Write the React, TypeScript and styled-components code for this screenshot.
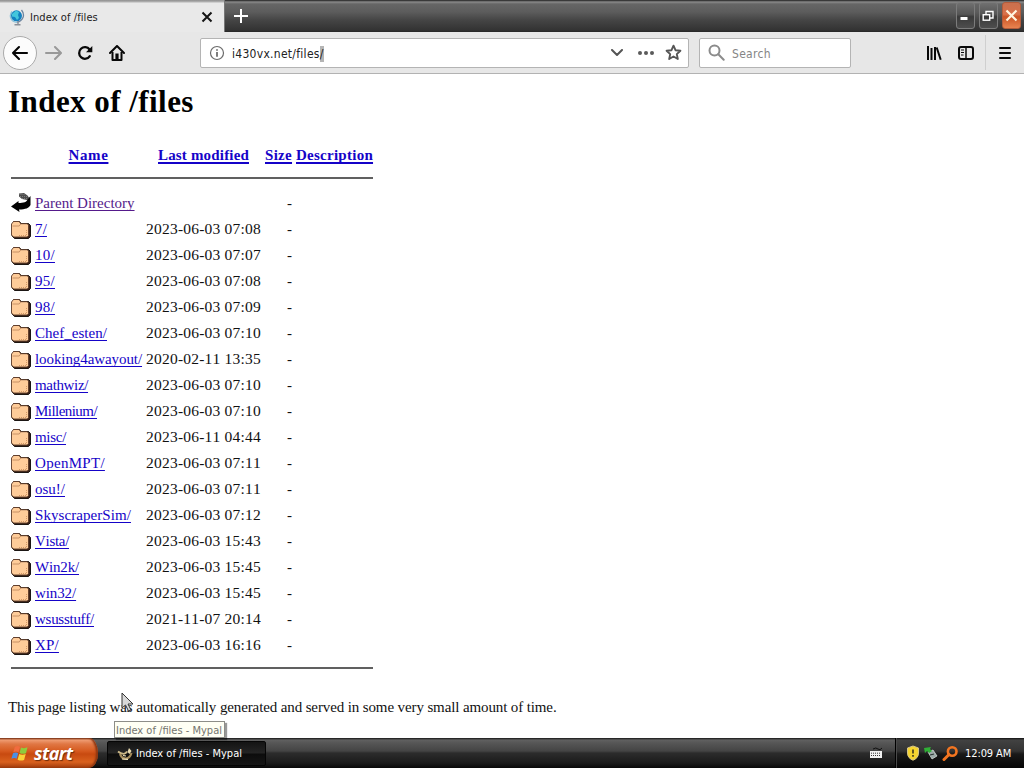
import React from "react";
import styled, { createGlobalStyle } from "styled-components";

const uiFont = `"DejaVu Sans Condensed", "DejaVu Sans", sans-serif`;
const pageFont = `"Liberation Serif", serif`;

const GlobalStyle = createGlobalStyle`
  *, *::before, *::after { box-sizing: border-box; }
  html, body { margin: 0; padding: 0; overflow: hidden; }
  svg { display: block; flex: none; }
`;

const Screen = styled.div`
  position: relative;
  display: flex;
  flex-direction: column;
  width: 1024px;
  height: 768px;
  background: #fff;
  overflow: hidden;
`;

/* ---------- Browser chrome ---------- */

const TitleBar = styled.header`
  display: flex;
  height: 32px;
  background: linear-gradient(#1e1e1e 0, #8a8a8a 2px, #666 4px, #5c5c5c 12px, #454545 20px, #333 30px, #262626 32px);
`;

const Tab = styled.div`
  display: flex;
  align-items: center;
  width: 225px;
  height: 32px;
  padding: 2px 10px 0 9px;
  background: linear-gradient(#8e8e8e 0, #b5b5b5 2px, #e9e9e9 3px);
  border-right: 1px solid #777;
`;

const UiText = styled.span<{ $size?: number; $track?: number; $color?: string }>`
  font: ${(p) => p.$size ?? 11}px/16px ${uiFont};
  letter-spacing: ${(p) => p.$track ?? 0}px;
  color: ${(p) => p.$color ?? "#222"};
  white-space: nowrap;
`;

const TabTitle = styled(UiText)`
  flex: 1;
  margin: 1px 0 0 5px;
`;

const NewTab = styled.div`
  display: flex;
  align-items: center;
  justify-content: center;
  width: 32px;
`;

const WindowButtons = styled.div`
  display: flex;
  gap: 4px;
  margin-left: auto;
  padding: 2px 3px 3px 0;
`;

const WindowButton = styled.div<{ $close?: boolean }>`
  display: flex;
  align-items: center;
  justify-content: center;
  width: 19px;
  height: 27px;
  border: 1px solid ${(p) => (p.$close ? "#b35c3b" : "#7c7c7c")};
  border-radius: 3px;
  background: ${(p) =>
    p.$close
      ? "linear-gradient(#c9704e, #d9714a 45%, #ca5424 55%, #e88350)"
      : "linear-gradient(#707070, #555 45%, #3a3a3a 55%, #4e4e4e)"};
`;

const Toolbar = styled.nav`
  display: flex;
  align-items: center;
  height: 42px;
  padding: 0 6px 0 3px;
  background: #e7e7e7;
  border-bottom: 1px solid #b2b2b2;
`;

const BackButton = styled.div`
  display: flex;
  align-items: center;
  justify-content: center;
  width: 34px;
  height: 34px;
  border: 1px solid #aaa;
  border-radius: 50%;
  background: #fcfcfc;
`;

const ToolIcon = styled.div<{ $width?: number }>`
  display: flex;
  align-items: center;
  justify-content: center;
  width: ${(p) => p.$width ?? 32}px;
  height: 32px;
`;

const Field = styled.div<{ $width: number; $left: number }>`
  display: flex;
  align-items: center;
  width: ${(p) => p.$width}px;
  height: 30px;
  margin-left: ${(p) => p.$left}px;
  padding: 0 6px 0 8px;
  background: #fff;
  border: 1px solid #b4b4b4;
  border-radius: 2px;
`;

const Address = styled(UiText)`
  flex: 1;
  margin: 2px 0 0 7px;
`;

const Selected = styled.span`
  padding: 1px 0;
  background: #b5b5b5;
`;

const FieldActions = styled.div`
  display: grid;
  grid-template-columns: 27px 28px 17px;
  align-items: center;
`;

const RightTools = styled.div`
  display: flex;
  align-items: center;
  margin-left: auto;
`;

const Divider = styled.div`
  width: 1px;
  height: 35px;
  margin: 0 6px 0 3px;
  background: #cfcfcf;
`;

/* ---------- Directory listing ---------- */

const Page = styled.main`
  flex: 1;
  padding: 0 8px;
  font: 15px/26px ${pageFont};
  font-kerning: none;
  font-variant-ligatures: none;
  color: #111;
`;

const Heading = styled.h1`
  margin: 9px 0 22px;
  font-size: 31px;
  line-height: 37px;
  letter-spacing: 0.45px;
  color: #000;
`;

const Listing = styled.div`
  width: 365px;
  padding-left: 3px;
`;

const Row = styled.div`
  display: grid;
  grid-template-columns: 24px 107px 4px 115px 4px 27px 4px 77px;
  align-items: center;
  height: 26px;
  white-space: nowrap;
`;

const Cell = styled.span<{ $col: number; $align?: string; $track?: number }>`
  grid-column: ${(p) => p.$col};
  grid-row: 1;
  text-align: ${(p) => p.$align ?? "left"};
  letter-spacing: ${(p) => p.$track ?? 0}px;
`;

const DateCell = styled(Cell)`
  font-size: 15.5px;
  line-height: 26px;
`;

const Link = styled.a<{ $visited?: boolean }>`
  color: ${(p) => (p.$visited ? "#551a8b" : "#1503c8")};
  text-decoration: underline;
  text-decoration-thickness: 1px;
  text-underline-offset: 2px;
  text-decoration-skip-ink: none;
`;

const HeadLink = styled(Link)`
  font-weight: bold;
  text-decoration-thickness: 2px;
`;

const Rule = styled.hr<{ $top: number; $bottom: number }>`
  height: 2px;
  margin: ${(p) => p.$top}px 0 ${(p) => p.$bottom}px;
  border: 0;
  background: #606060;
`;

const Footer = styled.p`
  margin: 25px 0 0;
  letter-spacing: -0.12px;
`;

/* ---------- Taskbar ---------- */

const Taskbar = styled.footer`
  display: flex;
  height: 30px;
  background: linear-gradient(#151515 0, #606060 2px, #565656 5px, #444 13px, #2c2c2c 15px, #1b1b1b 25px, #080808 30px);
`;

const StartButton = styled.div`
  display: flex;
  align-items: center;
  gap: 5px;
  width: 98px;
  padding-left: 11px;
  border-radius: 0 9px 9px 0 / 0 15px 15px 0;
  background: linear-gradient(#6d2b12 0, #ef9c72 2px, #e07744 6px, #d65a1f 13px, #c84a10 16px, #d9611e 24px, #9e3a0c 30px);
  box-shadow: inset -2px 0 2px #8b3510;
`;

const StartLabel = styled.span`
  font: italic bold 18px/26px "Open Sans", sans-serif;
  letter-spacing: -0.6px;
  color: #fff;
  text-shadow: 1px 1px 1px #6d2c0c;
`;

const TaskButton = styled.div`
  display: flex;
  align-items: center;
  gap: 3px;
  width: 159px;
  height: 25px;
  margin: 3px 0 0 9px;
  padding: 1px 0 0 9px;
  border: 1px solid #050505;
  border-radius: 2px;
  background: linear-gradient(#141414, #242424 48%, #0c0c0c 52%, #161616);
`;

const Keyboard = styled.div`
  display: flex;
  align-items: center;
  margin: 0 12px 0 auto;
`;

const Tray = styled.div`
  display: flex;
  align-items: center;
  gap: 3px;
  width: 129px;
  padding-left: 10px;
  border-left: 1px solid #000;
  box-shadow: inset 1px 0 #4a4a4a;
  background: linear-gradient(#111 0, #424242 2px, #333 13px, #191919 16px, #050505 30px);
`;

const Clock = styled(UiText)`
  margin: 1px 0 0 3px;
`;

/* ---------- Overlays ---------- */

const Tooltip = styled.div`
  position: absolute;
  left: 114px;
  top: 721px;
  display: flex;
  align-items: center;
  width: 111px;
  height: 17px;
  padding: 2px 0 0 1px;
  background: #fffff4;
  border: 1px solid #8d8d88;
  box-shadow: 2px 2px 1px rgba(0, 0, 0, 0.4);
`;

const Pointer = styled.div`
  position: absolute;
  left: 121px;
  top: 692px;
`;

const GlobeIcon = () => (
  <svg width="16" height="17" viewBox="0 0 16 17">
    <path d="M3 2.5C-.5 7 2 13 8 13.3" fill="none" stroke="#8cc2d8" strokeWidth="1.3" />
    <circle cx="7.5" cy="6.8" r="5.5" fill="#1380c0" />
    <path d="M3 5l4-3.4 3 1.4-1 3 1 3-2 2-2-3-3-.5z" fill="#43c6dc" />
    <path d="M12.5 1c4 5 1.5 11-4.5 12.2" fill="none" stroke="#6b84a0" strokeWidth="1.3" />
    <path d="M9 12.5v3M5.5 15.7h6" stroke="#8a8f98" strokeWidth="1.4" />
  </svg>
);

const BackIcon = () => (
  <svg width="18" height="16" viewBox="0 0 18 16" fill="none" stroke="#050505" strokeWidth="2.1" strokeLinecap="round" strokeLinejoin="round">
    <path d="M16 8H2M8 2L2 8l6 6" />
  </svg>
);

const ForwardIcon = () => (
  <svg width="17" height="14" viewBox="0 0 17 14" fill="none" stroke="#999" strokeWidth="2" strokeLinecap="round" strokeLinejoin="round">
    <path d="M1 7h14M10 1l6 6-6 6" />
  </svg>
);

const ReloadIcon = () => (
  <svg width="16" height="16" viewBox="0 0 16 16">
    <path d="M12.8 11.2A5.8 5.8 0 1 1 12.6 4.5" fill="none" stroke="#080808" strokeWidth="2.3" strokeLinecap="round" />
    <path d="M15.3 1v6.2H9z" fill="#080808" />
  </svg>
);

const HomeIcon = () => (
  <svg width="16" height="16" viewBox="0 0 16 16">
    <path d="M1 8l7-7 7 7" fill="none" stroke="#080808" strokeWidth="2" strokeLinecap="round" strokeLinejoin="round" />
    <path d="M3.5 7v8h9V7" fill="none" stroke="#080808" strokeWidth="2" strokeLinejoin="round" />
    <path d="M6.4 8.5h3.2v6H6.4z" fill="#080808" />
  </svg>
);

const InfoIcon = () => (
  <svg width="16" height="16" viewBox="0 0 16 16">
    <circle cx="8" cy="8" r="6.5" fill="none" stroke="#6b6b6b" strokeWidth="1.2" />
    <path d="M8 4.2v1.6M8 7v4.8" stroke="#666" strokeWidth="1.7" />
  </svg>
);

const ChevronIcon = () => (
  <svg width="14" height="8" viewBox="0 0 14 8">
    <path d="M2 1l5 5 5-5" fill="none" stroke="#555" strokeWidth="2" strokeLinecap="round" strokeLinejoin="round" />
  </svg>
);

const DotsIcon = () => (
  <svg width="18" height="6" viewBox="0 0 18 6" fill="#5a5a5a">
    <circle cx="3" cy="3" r="2" />
    <circle cx="9" cy="3" r="2" />
    <circle cx="15" cy="3" r="2" />
  </svg>
);

const StarIcon = () => (
  <svg width="17" height="17" viewBox="0 0 17 17">
    <path d="M8.5 1.7l2 4.5 4.9.5-3.6 3.4 1 4.9-4.3-2.5L4.2 15l1-4.9-3.6-3.4 4.9-.5z" fill="#fff" stroke="#555" strokeWidth="1.9" strokeLinejoin="round" />
  </svg>
);

const SearchIcon = () => (
  <svg width="17" height="17" viewBox="0 0 17 17" fill="none" stroke="#8b8b8b" strokeWidth="2">
    <circle cx="6.5" cy="6.5" r="5" />
    <path d="M10.3 10.3l5.4 5.4" strokeLinecap="round" />
  </svg>
);

const LibraryIcon = () => (
  <svg width="16" height="16" viewBox="0 0 16 16" fill="none" stroke="#080808" strokeWidth="2">
    <path d="M2 1v14M5.5 3v12M9 2v13M10.7 2.5l4 12.2" />
  </svg>
);

const SidebarIcon = () => (
  <svg width="16" height="16" viewBox="0 0 16 16" fill="none" stroke="#080808">
    <rect x="1" y="2" width="14" height="12" rx="2" strokeWidth="2" />
    <path d="M8 2v12" strokeWidth="1.5" />
    <path d="M3 5h3M3 7.5h3M3 10h2.5" strokeWidth="1" />
  </svg>
);

const MenuIcon = () => (
  <svg width="14" height="14" viewBox="0 0 14 14" stroke="#080808" strokeWidth="2" strokeLinecap="round">
    <path d="M2 2h10M2 7h10M2 12h10" />
  </svg>
);

const FolderIcon = () => (
  <svg width="20" height="22" viewBox="0 0 20 22">
    <path d="M2.5 3.5h6l1.5 2h7.5l2 2v11l-2 2H3.5L1 18z" fill="#3a2117" stroke="#0c0806" strokeWidth=".9" />
    <path d="M.5 6L2.5 3.5h5.7L9.700 5.700h6.600l1.200 1.400v10.400L16.300 19H2.500L.5 17z" fill="#ffcc99" stroke="#5c3a28" strokeWidth=".9" />
    <path d="M1.500 8h6.700L9.700 6" fill="none" stroke="#c28a60" strokeWidth=".9" />
    <path d="M15.500 12v5.500H8" fill="none" stroke="#d39866" strokeWidth="1" strokeDasharray="1 1" />
  </svg>
);

const ParentIcon = () => (
  <svg width="20" height="22" viewBox="0 0 20 22">
    <path d="M8 1.500l5-.5 3.500 2.500L19 7l-3 1-5-1-3-2.500z" fill="#4c4c4c" />
    <path d="M8.500 2.500h5M9 4.500h7M11 6.500h7" stroke="#888" strokeWidth=".8" strokeDasharray="1 1" />
    <path d="M19.500 4v9c-1.500 3-5 4.500-11.500 4.500l.5 2.500L0 14.500 7.500 9v2c5 0 8.500-1 9-3.500z" fill="#020202" />
  </svg>
);

const WindowsLogo = () => (
  <svg width="18" height="17" viewBox="0 0 18 17">
    <path d="M3.800 2q3-2 5.200 0L7.500 7.300q-2.200-1.500-5.200 0z" fill="#f06b3e" />
    <path d="M10 2.400q3 1.500 6.500-.1L15 8.200q-3.400 1.300-6.500-.3z" fill="#8ecc3d" />
    <path d="M2 8.200q3-1.500 5.200 0l-1.600 5.600q-2.200-1.500-5.200 0z" fill="#4b90e4" />
    <path d="M8.200 8.900q3 1.500 6.500.2L13.100 15q-3.400 1.300-6.500-.3z" fill="#f9d238" />
  </svg>
);

const MypalIcon = () => (
  <svg width="16" height="16" viewBox="0 0 16 16">
    <path d="M1 5.500q3 2.500 6 2.300 2-.5 3-2.300" fill="none" stroke="#cbb888" strokeWidth="1.800" />
    <path d="M3 8q2 5 6 4.500T14.500 7" fill="none" stroke="#a58c5c" strokeWidth="2.200" />
    <path d="M12 2l2.500 3-2 3-2-2z" fill="#e8dab0" />
    <path d="M6 9.500l3 .5M5 13l6 .4" stroke="#f6eac2" strokeWidth="1.200" />
  </svg>
);

const KeyboardIcon = () => (
  <svg width="14" height="14" viewBox="0 0 14 14">
    <path d="M4 3q3-2 5 0t4-1" fill="none" stroke="#111" />
    <rect x="1" y="5" width="12" height="7" fill="#f1f1f1" />
    <path d="M2 7.200h10M2 9.500h10" stroke="#333" strokeDasharray="1 1" />
  </svg>
);

const ShieldIcon = () => (
  <svg width="14" height="16" viewBox="0 0 14 16">
    <path d="M1.500 3L7 1l5.500 2v5c0 4-2.500 6-5.500 7.200C4 14 1.500 12 1.500 8z" fill="#f6d42f" stroke="#d5c486" />
    <path d="M7 4.500v4M7 10v1.700" stroke="#302d1b" strokeWidth="1.500" />
  </svg>
);

const EjectIcon = () => (
  <svg width="16" height="16" viewBox="0 0 16 16">
    <path d="M5 7l5-2 4 6-5 3z" fill="#9ba9a6" stroke="#e0e5df" strokeWidth=".7" />
    <path d="M7 10l4-1" stroke="#26302f" />
    <path d="M1 3l7-1-1 2 2 2-3 2-2-2-2 2z" fill="#2faf36" />
  </svg>
);

const MagnifierIcon = () => (
  <svg width="17" height="17" viewBox="0 0 17 17" fill="none" stroke="#f27521">
    <circle cx="10.200" cy="6.500" r="4.300" strokeWidth="2.600" />
    <path d="M7 9.500l-5 5" strokeWidth="3" strokeLinecap="round" />
  </svg>
);

type Entry = { name: string; modified: string; track: number };

const entries: Entry[] = [
  { name: "7/", modified: "2023-06-03 07:08", track: 0.15 },
  { name: "10/", modified: "2023-06-03 07:07", track: 0.27 },
  { name: "95/", modified: "2023-06-03 07:08", track: 0.27 },
  { name: "98/", modified: "2023-06-03 07:09", track: 0.27 },
  { name: "Chef_esten/", modified: "2023-06-03 07:10", track: 0.03 },
  { name: "looking4awayout/", modified: "2020-02-11 13:35", track: -0.08 },
  { name: "mathwiz/", modified: "2023-06-03 07:10", track: -0.35 },
  { name: "Millenium/", modified: "2023-06-03 07:10", track: -0.55 },
  { name: "misc/", modified: "2023-06-11 04:44", track: -0.3 },
  { name: "OpenMPT/", modified: "2023-06-03 07:11", track: 0.3 },
  { name: "osu!/", modified: "2023-06-03 07:11", track: 0 },
  { name: "SkyscraperSim/", modified: "2023-06-03 07:12", track: 0.07 },
  { name: "Vista/", modified: "2023-06-03 15:43", track: -0.3 },
  { name: "Win2k/", modified: "2023-06-03 15:45", track: -0.17 },
  { name: "win32/", modified: "2023-06-03 15:45", track: -0.1 },
  { name: "wsusstuff/", modified: "2021-11-07 20:14", track: -0.27 },
  { name: "XP/", modified: "2023-06-03 16:16", track: 0.2 },
];

export default function App() {
  return (
    <Screen>
      <GlobalStyle />
      <TitleBar>
        <Tab>
          <GlobeIcon />
          <TabTitle $track={0.08}>Index of /files</TabTitle>
          <svg width="14" height="14" viewBox="0 0 14 14" stroke="#151515" strokeWidth="2">
            <path d="M2.5 2.5l9 9M11.5 2.5l-9 9" />
          </svg>
        </Tab>
        <NewTab>
          <svg width="14" height="14" viewBox="0 0 14 14" stroke="#fff" strokeWidth="2">
            <path d="M7 0v14M0 7h14" />
          </svg>
        </NewTab>
        <WindowButtons>
          <WindowButton>
            <svg width="13" height="11" viewBox="0 0 13 11">
              <path d="M1.5 7h7v3h-7z" fill="#fff" />
            </svg>
          </WindowButton>
          <WindowButton>
            <svg width="13" height="12" viewBox="0 0 13 12" fill="none" stroke="#fff">
              <path d="M4 4V1.5h7V8H8" strokeWidth="1.4" />
              <rect x="1.2" y="4.7" width="6.5" height="5.5" strokeWidth="1.4" />
            </svg>
          </WindowButton>
          <WindowButton $close>
            <svg width="13" height="13" viewBox="0 0 13 13" stroke="#fff5df" strokeWidth="2.2">
              <path d="M1.5 1.5l10 10M11.5 1.5l-10 10" />
            </svg>
          </WindowButton>
        </WindowButtons>
      </TitleBar>

      <Toolbar>
        <BackButton><BackIcon /></BackButton>
        <ToolIcon><ForwardIcon /></ToolIcon>
        <ToolIcon><ReloadIcon /></ToolIcon>
        <ToolIcon><HomeIcon /></ToolIcon>
        <Field $width={489} $left={67}>
          <InfoIcon />
          <Address $size={12} $track={0.28}>
            i430vx.net/files<Selected>/</Selected>
          </Address>
          <FieldActions>
            <ChevronIcon />
            <DotsIcon />
            <StarIcon />
          </FieldActions>
        </Field>
        <Field $width={152} $left={10}>
          <SearchIcon />
          <Address $size={12} $track={0.3} $color="#858585">Search</Address>
        </Field>
        <RightTools>
          <ToolIcon><LibraryIcon /></ToolIcon>
          <ToolIcon><SidebarIcon /></ToolIcon>
          <Divider />
          <ToolIcon $width={26}><MenuIcon /></ToolIcon>
        </RightTools>
      </Toolbar>

      <Page>
        <Heading>Index of /files</Heading>
        <Listing>
          <Row>
            <Cell $col={2} $align="center" $track={0.6}><HeadLink>Name</HeadLink></Cell>
            <Cell $col={4} $align="center" $track={0.17}><HeadLink>Last modified</HeadLink></Cell>
            <Cell $col={6} $track={0.3}><HeadLink>Size</HeadLink></Cell>
            <Cell $col={8} $track={0.26}><HeadLink>Description</HeadLink></Cell>
          </Row>
          <Rule $top={9} $bottom={11} />
          <Row>
            <ParentIcon />
            <Cell $col={2}><Link $visited>Parent Directory</Link></Cell>
            <Cell $col={6} $align="right">-</Cell>
          </Row>
          {entries.map((entry) => (
            <Row key={entry.name}>
              <FolderIcon />
              <Cell $col={2} $track={entry.track}><Link>{entry.name}</Link></Cell>
              <DateCell $col={4} $align="right" $track={0.22}>{entry.modified}</DateCell>
              <Cell $col={6} $align="right">-</Cell>
            </Row>
          ))}
          <Rule $top={9} $bottom={0} />
        </Listing>
        <Footer>This page listing was automatically generated and served in some very small amount of time.</Footer>
      </Page>

      <Taskbar>
        <StartButton>
          <WindowsLogo />
          <StartLabel>start</StartLabel>
        </StartButton>
        <TaskButton>
          <MypalIcon />
          <UiText $color="#fff">Index of /files - Mypal</UiText>
        </TaskButton>
        <Keyboard><KeyboardIcon /></Keyboard>
        <Tray>
          <ShieldIcon />
          <EjectIcon />
          <MagnifierIcon />
          <Clock $track={-0.1} $color="#fff">12:09 AM</Clock>
        </Tray>
      </Taskbar>

      <Tooltip>
        <UiText $color="#74746e">Index of /files - Mypal</UiText>
      </Tooltip>
      <Pointer>
        <svg width="14" height="21" viewBox="0 0 14 21">
          <path d="M1 1v15l3.5-3 3 6 2.5-1-3-6H12z" fill="#d8d8d8" stroke="#333" />
        </svg>
      </Pointer>
    </Screen>
  );
}
